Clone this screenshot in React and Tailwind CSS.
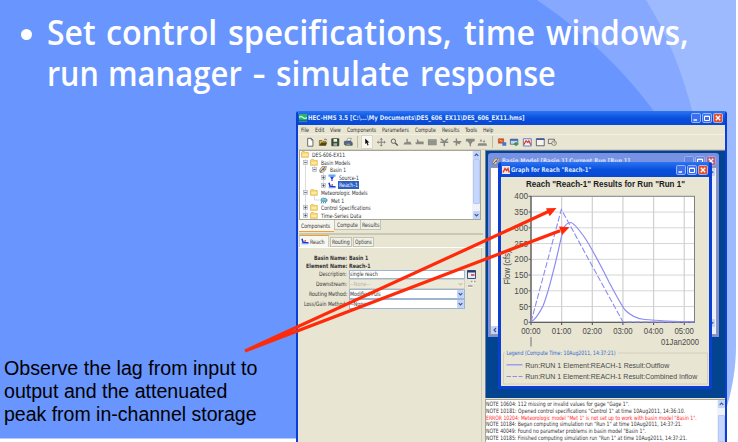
import { useLayoutEffect, useRef, useState } from "react";

// One line of text, stretched horizontally to the width of its box.
function Fit({ className = "", children }) {
  const box = useRef(null);
  const text = useRef(null);
  const [scale, setScale] = useState(1);
  useLayoutEffect(() => {
    setScale(box.current.clientWidth / text.current.offsetWidth);
  }, []);
  return (
    <span ref={box} className={`block shrink-0 whitespace-nowrap ${className}`}>
      <span ref={text} className="inline-block origin-left" style={{ transform: `scaleX(${scale})` }}>
        {children}
      </span>
    </span>
  );
}

function WindowButtons({ faded = false }) {
  const blue = faded ? "#6485e0" : "#3d6df0";
  const red = faded ? "#b9607f" : "#e4502c";
  const edge = faded ? "#a9bbf0" : "#c9d8ff";
  return (
    <svg viewBox="0 0 33 10" className="h-[10px] w-[33px] shrink-0">
      <rect x="0.5" y="0.5" width="9" height="9" rx="1.2" fill={blue} stroke={edge} strokeWidth="0.7" />
      <rect x="11.5" y="0.5" width="9" height="9" rx="1.2" fill={blue} stroke={edge} strokeWidth="0.7" />
      <rect x="22.5" y="0.5" width="9" height="9" rx="1.2" fill={red} stroke={edge} strokeWidth="0.7" />
      <path d="M2.5 7h3.5" stroke="#fff" strokeWidth="1.4" />
      <path d="M13.5 3.2h5v4.3h-5zM13.5 3.4h5" fill="none" stroke="#fff" strokeWidth="1" />
      <path d="M24.8 2.8l4.4 4.4M29.2 2.8l-4.4 4.4" stroke="#fff" strokeWidth="1.3" />
    </svg>
  );
}

function Folder() {
  return (
    <svg viewBox="0 0 8 7" className="h-[7px] w-[8px] shrink-0">
      <path d="M0.5 1.3L1.3.5h2l.8.9h3.2v4.9H.5z" fill="#f9d468" stroke="#d9a94a" strokeWidth="0.6" />
      <path d="M1.4 2.7h5.2v2.6H1.4z" fill="#ffeba0" />
    </svg>
  );
}

function BasinIcon({ className = "h-[7px] w-[8px]" }) {
  return (
    <svg viewBox="0 0 8 7" className={`shrink-0 ${className}`}>
      <path d="M1 6.5L.6 4 3 .6 7.4.4 6.6 4 3.5 6.6z" fill="#f0cf78" stroke="#6b6f80" strokeWidth="0.6" />
      <path d="M1.4 6L3.6 3.4 6 1.4M3.6 3.4L5.6 4" fill="none" stroke="#2454d8" strokeWidth="0.9" />
    </svg>
  );
}

function SourceIcon() {
  return (
    <svg viewBox="0 0 8 7" className="h-[7px] w-[8px] shrink-0">
      <path d="M.5.5h7v2.3h-7z" fill="#5fa8f4" />
      <path d="M2 2.8h4L4.6 5v2H3.4V5z" fill="#1b3fe0" />
    </svg>
  );
}

function ReachIcon() {
  return (
    <svg viewBox="0 0 8 7" className="h-[7px] w-[8px] shrink-0">
      <path d="M1 .7l1 3.6 2 .3L7.6 5" fill="none" stroke="#1c35d8" strokeWidth="1.5" />
      <path d="M.5 5.8h6" stroke="#58a4f0" strokeWidth="1.1" />
      <circle cx="4.2" cy="3" r="0.9" fill="#d8594a" />
    </svg>
  );
}

function MetIcon() {
  return (
    <svg viewBox="0 0 8 7" className="h-[7px] w-[8px] shrink-0">
      <path d="M1 3.2C1 1 3.5.5 4.3 1.6 6 .7 7.6 2.3 7 4.2H1.2z" fill="#8fc6dc" stroke="#2d7f9d" strokeWidth="0.7" />
      <path d="M2 4.4l-.8 2M4 4.4l-.8 2M6 4.4l-.8 2" stroke="#1f739a" strokeWidth="0.8" />
    </svg>
  );
}

function Expander({ open }) {
  return (
    <svg viewBox="0 0 5 5" className="h-[5px] w-[5px] shrink-0">
      <rect x="0.5" y="0.5" width="4" height="4" fill="#e4e8ee" stroke="#a3adbd" strokeWidth="0.6" />
      <path d={open ? "M1.2 2.5h2.6" : "M1.2 2.5h2.6M2.5 1.2v2.6"} stroke="#333" strokeWidth="0.6" />
    </svg>
  );
}

function ScrollArrow({ up = false, className = "h-[8px] w-[7px]" }) {
  return (
    <svg viewBox="0 0 7 8" className={`shrink-0 ${className}`}>
      <rect x="0" y="0" width="7" height="8" rx="1" fill="#c3d4fb" />
      <path d={up ? "M1.7 4.9L3.5 3.1l1.8 1.8" : "M1.7 3.1l1.8 1.8 1.8-1.8"} fill="none" stroke="#3d5590" strokeWidth="1.2" />
    </svg>
  );
}

const tree = [
  { indent: "pl-[1px]", icon: <Folder />, label: "DES-606-EX11", w: "w-[33px]" },
  { indent: "pl-[3px]", open: true, icon: <Folder />, label: "Basin Models", w: "w-[29px]" },
  { indent: "pl-[12px]", open: true, icon: <BasinIcon />, label: "Basin 1", w: "w-[16px]" },
  { indent: "pl-[21px]", open: false, icon: <SourceIcon />, label: "Source-1", w: "w-[20px]" },
  { indent: "pl-[21px]", open: false, icon: <ReachIcon />, label: "Reach-1", w: "w-[19px]", selected: true },
  { indent: "pl-[3px]", open: true, icon: <Folder />, label: "Meteorologic Models", w: "w-[47px]" },
  { indent: "pl-[20px]", icon: <MetIcon />, label: "Met 1", w: "w-[13px]" },
  { indent: "pl-[3px]", open: false, icon: <Folder />, label: "Control Specifications", w: "w-[50px]" },
  { indent: "pl-[3px]", open: false, icon: <Folder />, label: "Time-Series Data", w: "w-[40px]" },
];

function Tree() {
  return (
    <div className="flex h-[70px] w-[182px] overflow-hidden border border-[#a5a699] bg-white">
      <div className="relative flex min-w-0 grow flex-col">
        <svg viewBox="0 0 60 69" className="absolute left-0 top-0 h-[69px] w-[60px]">
          <path d="M5.5 8v58M14.5 15v5M23.5 22v13M14.5 45v4h5" fill="none" stroke="#c5c5c5" strokeWidth="0.6" />
        </svg>
        {tree.map((n) => (
          <div key={n.label} className={`relative flex h-[7.6px] shrink-0 items-center gap-[2px] ${n.indent}`}>
            {n.open !== undefined && <Expander open={n.open} />}
            {n.icon}
            <span className={n.selected ? "bg-[#2c60c0] px-[1px] text-white" : "px-[1px]"}>
              <Fit className={`leading-[7.5px] ${n.w}`}>{n.label}</Fit>
            </span>
          </div>
        ))}
      </div>
      <div className="flex w-[8px] flex-col items-center bg-[#f0f2f8]">
        <ScrollArrow up />
        <div className="w-[7px] grow rounded-[1px] border border-[#b4c8f6] bg-[#c6d6fc]" />
        <div className="h-[7px]" />
        <ScrollArrow />
      </div>
    </div>
  );
}

const toolIcons = [
  <g key="new"><path d="M3 1.5h4l2 2v7H3z" fill="#fff" stroke="#333" strokeWidth="0.8" /><path d="M7 1.5v2h2" fill="none" stroke="#333" strokeWidth="0.7" /></g>,
  <g key="open"><path d="M1.5 9.5V4h3l1 1H9v4.5z" fill="#d7b53a" stroke="#54481b" strokeWidth="0.7" /><path d="M1.5 9.8l2-3.5h7l-2 3.5z" fill="#4e461b" /><path d="M7 2.8q2-1.5 3 1" fill="none" stroke="#333" strokeWidth="0.8" /></g>,
  <g key="save"><path d="M2 2h8v8H2z" fill="#3b5236" stroke="#1d261b" strokeWidth="0.8" /><path d="M4 2.4h4v3H4z" fill="#eef1ec" /><path d="M4 7.2h4V10H4z" fill="#a9b1a6" /></g>,
  <g key="print"><path d="M4 5l1.5-3.5h4L8 5z" fill="#fff" stroke="#566" strokeWidth="0.6" /><path d="M1.5 5l7-.5 2 2v3H3l-1.5-1z" fill="#56648c" stroke="#333" strokeWidth="0.6" /><path d="M4 8.3h4" stroke="#7fc46b" strokeWidth="1.1" /></g>,
];

const drawIcons = [
  <g key="move" stroke="#777" strokeWidth="1" fill="none"><path d="M6 1.5v9M1.5 6h9M4.7 3L6 1.6 7.3 3M4.7 9L6 10.4 7.3 9M3 4.7L1.6 6 3 7.3M9 4.7L10.4 6 9 7.3" /></g>,
  <g key="zoom" fill="none" stroke="#555" strokeWidth="1"><circle cx="5" cy="4.8" r="2.5" /><path d="M7 6.8l3 3" strokeWidth="1.5" /></g>,
  <g key="subbasin" fill="#8a8a83"><path d="M5 2h1.6v3.4h3L11 8.6H1.5L3 6h2z" /></g>,
  <g key="reach" fill="#8a8a83"><path d="M3 2.8h1.6L5.4 5H11v3.3H2L1.5 6h2z" /></g>,
  <g key="reservoir" fill="#8a8a83"><path d="M1 2.5h10v7H1z" /><path d="M2 4h8M2 6h8M2 8h8" stroke="#aaa" strokeWidth="0.6" /></g>,
  <g key="junction" fill="none" stroke="#85857e" strokeWidth="1.7"><path d="M2 2l4 3.4L10 2M1.5 6h9M6 5v5.5" /></g>,
  <g key="diversion" fill="none" stroke="#85857e" strokeWidth="1.7"><path d="M5 1.8v8M1.5 5.5h9M5 5.5l4 2.2" /></g>,
  <g key="source" fill="#8a8a83"><path d="M1 2h10v3H1zM3 5h6L6.8 8v2.5H5.2V8z" /></g>,
  <g key="sink" fill="#8a8a83"><path d="M1.5 7h9l1 3h-11zM3 5l1.5-3L6 5zM6.5 6L8 3.2 9.5 6z" /></g>,
];

const resultIcons = [
  <g key="run"><path d="M1.5 2h6v5h-6z" fill="#e5522c" stroke="#9d3c23" strokeWidth="0.6" /><path d="M3 3.3l3 2" stroke="#ffd15e" /><path d="M6 6h4.5v4H6z" fill="#3d79cf" /></g>,
  <g key="forecast"><path d="M1.5 2.5h8.5v5.8H1.5z" fill="#c7d7ef" stroke="#354d83" strokeWidth="0.8" /><path d="M1.5 2.5h8.5v1.8H1.5z" fill="#315db8" /><path d="M5 8l3-2.6L11 8 8 10.6z" fill="#3c9a4c" /></g>,
  <g key="graph"><path d="M1.5 2h9v8.3h-9z" fill="#f2f4fa" stroke="#4664af" strokeWidth="0.9" /><path d="M2 8.7l2.6-4.4 2 2 1.2-2L10 8.8" fill="none" stroke="#dd3b2b" strokeWidth="1.5" /></g>,
  <g key="table"><path d="M1.5 2h9v8h-9z" fill="#f5f5ef" stroke="#445" strokeWidth="0.9" /><path d="M1.5 2.6h9" stroke="#3b5b9f" strokeWidth="1.5" /></g>,
  <g key="series"><path d="M1.5 2.5h7v5h-7z" fill="#ece9dc" stroke="#555" strokeWidth="0.9" /><circle cx="8" cy="7" r="2.6" fill="#f4f1e6" stroke="#666" strokeWidth="0.9" /><path d="M8 5.5V7h1.2" fill="none" stroke="#b44" strokeWidth="0.7" /></g>,
];

function ToolIcon({ children }) {
  return (
    <svg viewBox="0 0 12 12" className="h-[10.5px] w-[12.6px] shrink-0">
      {children}
    </svg>
  );
}

const menus = [
  ["File", "w-[8px]"],
  ["Edit", "w-[9px]"],
  ["View", "w-[11px]"],
  ["Components", "w-[29px]"],
  ["Parameters", "w-[27px]"],
  ["Compute", "w-[21px]"],
  ["Results", "w-[17px]"],
  ["Tools", "w-[12px]"],
  ["Help", "w-[10px]"],
];

function FormRow({ label, w, children }) {
  return (
    <div className="flex h-[9.9px] items-center">
      <div className="flex w-[48px] shrink-0 justify-end">
        <Fit className={w}>{label}</Fit>
      </div>
      {children}
    </div>
  );
}

function Field({ text, w, select, disabled }) {
  return (
    <div
      className={`ml-[2px] flex h-[9.5px] w-[116px] items-center justify-between border ${
        disabled ? "border-[#d3d0bd] bg-[#ece9d8] text-[#b5b3a6]" : "border-[#9db5d0] bg-white"
      }`}
    >
      <Fit className={w}>{text}</Fit>
      {select && !disabled && <ScrollArrow />}
      {disabled && (
        <svg viewBox="0 0 7 8" className="h-[8px] w-[7px]">
          <path d="M1.7 3.1l1.8 1.8 1.8-1.8" fill="none" stroke="#c4c1b2" strokeWidth="1.1" />
        </svg>
      )}
    </div>
  );
}

function LeftPane() {
  return (
    <div className="flex w-[187px] shrink-0 flex-col pl-[1px]">
      <Tree />
      <div className="flex h-[12px] items-start">
        <div className="flex h-[12px] w-[35px] items-center border-b border-[#f0a030] bg-[#f6f5ee] pl-[2px]">
          <Fit className="w-[29px]">Components</Fit>
        </div>
        <div className="flex h-[10px] w-[27px] items-center border border-t-0 border-[#c4c3b2] bg-[#f1f0e6] pl-[2px]">
          <Fit className="w-[21px]">Compute</Fit>
        </div>
        <div className="flex h-[10px] w-[20px] items-center border border-l-0 border-t-0 border-[#c4c3b2] bg-[#f1f0e6] pl-[1px]">
          <Fit className="w-[17px]">Results</Fit>
        </div>
      </div>
      <div className="mt-[1px] h-[2px] w-[184px] border-y border-[#c9c7b6]" />
      <div className="mt-[1px] flex h-[12px] w-[184px] items-end border-b border-white">
        <div className="flex h-[12px] w-[30px] items-center gap-[1px] border-x border-t-[1.5px] border-x-[#d0cfbe] border-t-[#f0a030] bg-[#f8f7f1] pl-[1px]">
          <ReachIcon />
          <Fit className="w-[15px]">Reach</Fit>
        </div>
        <div className="ml-[1px] flex h-[10px] w-[22px] items-center border border-[#c4c3b2] bg-[#f1f0e6] pl-[1px]">
          <Fit className="w-[18px]">Routing</Fit>
        </div>
        <div className="ml-[1px] flex h-[10px] w-[21px] items-center border border-[#c4c3b2] bg-[#f1f0e6] pl-[1px]">
          <Fit className="w-[17px]">Options</Fit>
        </div>
      </div>
      <div className="flex w-[183px] grow flex-col border-r border-[#cfccba] pt-[6px]">
        <div className="flex h-[7.7px] items-center font-bold">
          <div className="flex w-[48px] justify-end"><Fit className="w-[33px]">Basin Name:</Fit></div>
          <Fit className="ml-[2px] w-[19px]">Basin 1</Fit>
        </div>
        <div className="flex h-[7.7px] items-center font-bold">
          <div className="flex w-[48px] justify-end"><Fit className="w-[41px]">Element Name:</Fit></div>
          <Fit className="ml-[2px] w-[22px]">Reach-1</Fit>
        </div>
        <FormRow label="Description:" w="w-[28px]">
          <Field text="single reach" w="w-[28px]" />
          <svg viewBox="0 0 9 9" className="ml-[2px] h-[9px] w-[9px]">
            <path d="M.5.5h8v8h-8z" fill="#e8ebf4" stroke="#3a4f88" />
            <path d="M.5 1.5h8" stroke="#26396f" strokeWidth="2" />
            <path d="M4 5h3.5" stroke="#c33c31" strokeWidth="1.5" />
          </svg>
        </FormRow>
        <FormRow label="Downstream:" w="w-[31px]">
          <Field text="--None--" w="w-[20px]" disabled />
          <svg viewBox="0 0 9 9" className="ml-[2px] h-[9px] w-[9px]">
            <path d="M4 .5h4.500v3H4zM.8 5h4.500v3H.8z" fill="#f4f3ec" />
            <path d="M4 1.500h1.500M7 1.500h1.500M1 6h4.500" fill="none" stroke="#99988e" strokeWidth="1.500" />
          </svg>
        </FormRow>
        <FormRow label="Routing Method:" w="w-[38px]">
          <Field text="Modified Puls" w="w-[31px]" select />
        </FormRow>
        <FormRow label="Loss/Gain Method:" w="w-[43px]">
          <Field text="--None--" w="w-[20px]" select />
        </FormRow>
      </div>
    </div>
  );
}

const yTicks = [400, 350, 300, 250, 200, 150, 100, 50, 0];
const xTicks = ["00:00", "01:00", "02:00", "03:00", "04:00", "05:00"];

// Hydrograph: inflow (dashed) and routed outflow (solid).
function Hydrograph() {
  return (
    <svg viewBox="501 176 208 209" className="block h-[209px] w-[208px] shrink-0 overflow-visible" fontFamily='"Liberation Sans", Arial, sans-serif' fontSize="9" fill="#4a4a4a">
      <text x="526" y="185.6" textLength="159" lengthAdjust="spacingAndGlyphs" fontWeight="bold" fontSize="8.8" fill="#1c1c1c">
        Reach "Reach-1" Results for Run "Run 1"
      </text>
      <rect x="531" y="195.3" width="163.5" height="126" fill="#fff" stroke="#808080" strokeWidth="1" />
      {yTicks.map((v, i) => (
        <g key={v}>
          {i > 0 && i < 8 && <path d={`M531.5 ${195.3 + i * 15.75}h162.5`} stroke="#d6d6d6" strokeWidth="1" />}
          <path d={`M528.5 ${195.3 + i * 15.75}h2.5`} stroke="#555" strokeWidth="0.9" />
          <text x="528" y={198.4 + i * 15.75} textAnchor="end" fontSize="8.2">{v}</text>
        </g>
      ))}
      {xTicks.map((t, i) => (
        <g key={t}>
          {i > 0 && <path d={`M${531 + i * 30.65} 196v125`} stroke="#d0d0d0" strokeWidth="1.2" />}
          <path d={`M${531 + i * 30.65} 321v3`} stroke="#444" strokeWidth="1" />
          <text x={521.2 + i * 30.65} y="333.3" textLength="19.5" lengthAdjust="spacingAndGlyphs" fontSize="8.4">{t}</text>
        </g>
      ))}
      <path d="M531 195v126.3h163.5" fill="none" stroke="#555" strokeWidth="1" />
      <path d="M531 336v9.5" stroke="#555" strokeWidth="0.8" />
      <text x="661" y="344.3" textLength="38" lengthAdjust="spacingAndGlyphs" fontSize="8.2">01Jan2000</text>
      <text transform="translate(510.3 283.5) rotate(-90)" textLength="34" lengthAdjust="spacingAndGlyphs" fontSize="8.2">Flow (cfs)</text>
      <path d="M531 321L561.3 208.5 623 321H694" fill="none" stroke="#8c8cf6" strokeWidth="1.1" strokeDasharray="6 2" />
      <path
        d="M531 321C536 318 540 311 543 305 551 285 559 246 563 229 565 223 568 221.5 571 221.5 574 222 580 230 585 237 594 251 603 269 609 281 615 292 620 302 625 309 632 316 638 318 645 318.5 660 320 675 320.5 694 320.6"
        fill="none"
        stroke="#8c8cf6"
        strokeWidth="1.2"
      />
      <path d="M505 352h-1.5v31h204V352H618" fill="none" stroke="#cfccba" strokeWidth="0.8" />
      <text x="506.5" y="353.8" textLength="109" lengthAdjust="spacingAndGlyphs" fontSize="6" fill="#2f66d0" fontFamily='"DejaVu Sans Condensed", "Noto Sans", sans-serif'>
        Legend (Compute Time: 10Aug2011, 14:37:21)
      </text>
      <path d="M506.5 363.8h16" stroke="#8c8cf6" strokeWidth="1.2" />
      <path d="M506.5 375.5h16" stroke="#8c8cf6" strokeWidth="1.2" strokeDasharray="4.5 1.5" />
      <text x="525.3" y="366.6" textLength="144" lengthAdjust="spacingAndGlyphs" fontSize="7.8">Run:RUN 1 Element:REACH-1 Result:Outflow</text>
      <text x="525.3" y="378.3" textLength="172" lengthAdjust="spacingAndGlyphs" fontSize="7.8">Run:RUN 1 Element:REACH-1 Result:Combined Inflow</text>
    </svg>
  );
}

function Desktop() {
  return (
    <div className="relative h-[248px] border-l border-t border-[#6a7fa2] bg-[#034490]">
      <div className="absolute left-[2px] top-[2px] flex h-[184px] w-[231px] flex-col rounded-t-[3px] border-2 border-[#7b8ee2] bg-[#ece9d8]">
        <div className="flex h-[12px] shrink-0 items-center bg-[#7792e2] pl-[2px] font-bold text-[#d5dfff]">
          <BasinIcon />
          <Fit className="ml-[2px] w-[128px] text-[6.5px]">Basin Model [Basin 1] Current Run [Run 1]</Fit>
          <div className="ml-auto"><WindowButtons faded /></div>
        </div>
        <div className="flex grow items-end justify-between border border-[#9a9a90] bg-white">
          <svg viewBox="0 0 8 8" className="h-[8px] w-[8px]">
            <rect width="8" height="8" fill="#c3d4fb" />
            <path d="M5 2L3 4l2 2" fill="none" stroke="#3d5590" strokeWidth="1.2" />
          </svg>
          <div className="flex h-full w-[8px] flex-col justify-between bg-[#edf0fa] pb-[7px]">
            <ScrollArrow up />
            <ScrollArrow />
          </div>
        </div>
      </div>
      <div className="absolute left-[12px] top-[11px] flex h-[227px] w-[214px] flex-col rounded-t-[3px] border-x-[3px] border-b-[3px] border-[#0b3ed4] bg-[#e8e5d2]">
        <div className="flex h-[15px] shrink-0 items-center bg-linear-to-b from-[#2a74f2] via-[#0950dd] to-[#0848cf] pl-[1px] font-bold text-[#d9e6ff]">
          <svg viewBox="0 0 8 8" className="h-[8px] w-[8px]">
            <rect width="8" height="8" fill="#f4e5e8" />
            <path d="M1 6.500l2-4 1.500 2L6 2.500l1.300 4" fill="none" stroke="#dd3b2b" strokeWidth="1.4" />
          </svg>
          <Fit className="ml-[1px] w-[80px] text-[6.5px]">Graph for Reach "Reach-1"</Fit>
          <div className="ml-auto"><WindowButtons /></div>
        </div>
        <Hydrograph />
      </div>
    </div>
  );
}

const log = [
  ["NOTE 10604:  112 missing or invalid values for gage \"Gage 1\".", "w-[143px]"],
  ["NOTE 10181:  Opened control specifications \"Control 1\" at time 10Aug2011, 14:36:10.", "w-[199px]"],
  ["ERROR 10204:  Meteorologic model \"Met 1\" is not set up to work with basin model \"Basin 1\".", "w-[211px] text-[#ff2a2a]"],
  ["NOTE 10184:  Began computing simulation run \"Run 1\" at time 10Aug2011, 14:37:21.", "w-[196px]"],
  ["NOTE 40049:  Found no parameter problems in basin model \"Basin 1\".", "w-[160px]"],
  ["NOTE 10185:  Finished computing simulation run \"Run 1\" at time 10Aug2011, 14:37:21.", "w-[201px]"],
];

function Log() {
  return (
    <div className="mt-[1px] flex grow overflow-hidden border-l border-t border-[#a5a699] bg-white">
      <div className="flex grow flex-col whitespace-pre pt-[1px]">
        {log.map(([text, w]) => (
          <Fit key={text} className={`h-[6.75px] leading-[6.75px] ${w}`}>{text}</Fit>
        ))}
      </div>
      <div className="flex w-[8px] flex-col items-center bg-[#f0f2f8]">
        <ScrollArrow up />
        <div className="mt-[7px] w-[7px] grow rounded-t-[1px] border border-[#b4c8f6] bg-[#c6d6fc]" />
      </div>
    </div>
  );
}

function HmsWindow() {
  return (
    <div className='ml-[296px] flex h-[331px] w-[431px] flex-col overflow-hidden rounded-t-[3px] border-x-2 border-[#0b3ed4] bg-[#e8e5d2] font-["DejaVu_Sans_Condensed","Noto_Sans",sans-serif] text-[6px] leading-[8px] text-[#333]'>
      <div className="flex h-[14px] shrink-0 items-center bg-linear-to-b from-[#2a74f2] via-[#0950dd] to-[#0848d4] pl-[1px] pr-[1px] font-bold text-[#e3ecff]">
        <svg viewBox="0 0 8 8" className="h-[8px] w-[8px]">
          <rect width="8" height="8" fill="#2bb55c" />
          <path d="M0 3.500q2-2 4 0t4 0" fill="none" stroke="#b7f0e0" strokeWidth="1.3" />
          <path d="M0 6.500h8" stroke="#1b5fc0" strokeWidth="1.5" />
        </svg>
        <Fit className="ml-[1px] w-[216px] text-[6.5px]">HEC-HMS 3.5 [C:\...\My Documents\DES_606_EX11\DES_606_EX11.hms]</Fit>
        <div className="ml-auto"><WindowButtons /></div>
      </div>
      <div className="flex h-[9px] shrink-0 items-center gap-[6px] pl-[3px]">
        {menus.map(([m, w]) => (
          <Fit key={m} className={w}>{m}</Fit>
        ))}
      </div>
      <div className="flex h-[16px] shrink-0 items-center border-b border-t border-b-[#d3d0bd] border-t-[#f3f1e4] pl-[6px]">
        {toolIcons.map((g) => (
          <ToolIcon key={g.key}>{g}</ToolIcon>
        ))}
        <div className="mx-[3px] h-[12px] w-px bg-[#bdbaa8]" />
        <div className="mr-[2px] flex h-[14px] w-[12px] items-center justify-center border border-[#d8d6c8] bg-[#f7f6ef]">
          <svg viewBox="0 0 6 9" className="h-[8px] w-[6px]">
            <path d="M1 .5v6.300l1.500-1.300 1.200 2.800 1.100-.5-1.200-2.700h2z" fill="#111" />
          </svg>
        </div>
        {drawIcons.map((g) => (
          <ToolIcon key={g.key}>{g}</ToolIcon>
        ))}
        <div className="mx-[3px] h-[12px] w-px bg-[#bdbaa8]" />
        {resultIcons.map((g) => (
          <ToolIcon key={g.key}>{g}</ToolIcon>
        ))}
      </div>
      <div className="flex min-h-0 grow">
        <LeftPane />
        <div className="flex min-w-0 grow flex-col">
          <Desktop />
          <Log />
        </div>
      </div>
    </div>
  );
}

export default function App() {
  return (
    <div className="relative flex h-[442px] w-[738px] flex-col overflow-hidden bg-white">
      <svg viewBox="0 0 738 442" className="absolute left-0 top-0 h-[442px] w-[738px]">
        <path d="M0 0h736v438.500H0z" fill="#6895fe" />
        <path d="M537 0C577 27 620 65 653 110 690 162 712 220 715 300V438.500h21V0z" fill="#86a9ff" />
        <path d="M646 0C668 35 682 72 692 110L715 300 715 438C727 415 736 380 736 345V0z" fill="#9dbaff" />
        <path d="M736 345C736 380 727 415 712 442h26v-97z" fill="#fff" />
      </svg>
      <div className='relative flex h-[111px] shrink-0 pl-[21px] pt-[11px] font-["Open_Sans",sans-serif] text-[34.5px] font-semibold leading-[41px] text-white'>
        <div className="flex h-[41px] w-[26px] items-center pt-[6px]">
          <div className="h-[11px] w-[11px] rounded-full bg-white" />
        </div>
        <div>
          <div className="flex">
            <Fit className="w-[49px]">Set</Fit>
            <Fit className="ml-[10px] w-[111px]">control</Fit>
            <Fit className="ml-[11px] w-[224px]">specifications,</Fit>
            <Fit className="ml-[12px] w-[71px]">time</Fit>
            <Fit className="ml-[11px] w-[143px]">windows,</Fit>
          </div>
          <div className="flex">
            <Fit className="w-[52px]">run</Fit>
            <Fit className="ml-[9px] w-[134px]">manager</Fit>
            <Fit className="ml-[11px] w-[12px]">–</Fit>
            <Fit className="ml-[11px] w-[133px]">simulate</Fit>
            <Fit className="ml-[11px] w-[136px]">response</Fit>
          </div>
        </div>
      </div>
      <div className="relative">
        <HmsWindow />
        <div className='absolute left-[4px] top-[246px] font-["Liberation_Sans",Arial,sans-serif] text-[19.5px] leading-[23px] text-black'>
          <Fit className="w-[253px]">Observe the lag from input to</Fit>
          <Fit className="w-[223px]">output and the attenuated</Fit>
          <Fit className="w-[253px]">peak from in-channel storage</Fit>
        </div>
      </div>
      <svg viewBox="0 0 738 442" className="absolute left-0 top-0 h-[442px] w-[738px]">
        <path d="M245 351L549 211.300M245 351L560 230.700" stroke="#ff2a0a" strokeWidth="3.2" />
        <path d="M556.500 208l-10.500 0.200 3.700 8zM569.500 227.300l-10.500-.8 3.100 8.600z" fill="#ff2a0a" />
      </svg>
    </div>
  );
}
